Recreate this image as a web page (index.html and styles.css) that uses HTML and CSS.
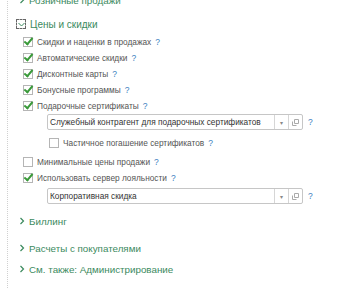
FILE: index.html
```html
<!DOCTYPE html>
<html>
<head>
    <title>Цены и скидки</title>
    <link rel="stylesheet" href="styles.css">
</head>
<body>
    <div class="panel">
        <div class="group-title cut">
            <svg class="chev" width="10" height="8" viewBox="0 0 10 8"><path d="M1.5 1 L4.5 4 L1.5 7" fill="none" stroke="#3b8a5e" stroke-width="1.2"/></svg>
            <span>Розничные продажи</span>
        </div>

        <div class="group-title open">
            <span class="toggle">
                <svg width="7" height="7" viewBox="0 0 7 7"><path d="M0.5 2 L3.5 5 L6.5 2" fill="none" stroke="#3b8a5e" stroke-width="1"/></svg>
            </span>
            <span class="big">Цены и скидки</span>
        </div>

        <div class="row first">
            <span class="box checked"></span>
            <span>Скидки и наценки в продажах</span>
            <span class="help">?</span>
        </div>
        <div class="row">
            <span class="box checked"></span>
            <span>Автоматические скидки</span>
            <span class="help">?</span>
        </div>
        <div class="row">
            <span class="box checked"></span>
            <span>Дисконтные карты</span>
            <span class="help">?</span>
        </div>
        <div class="row">
            <span class="box checked"></span>
            <span>Бонусные программы</span>
            <span class="help">?</span>
        </div>
        <div class="row">
            <span class="box checked"></span>
            <span>Подарочные сертификаты</span>
            <span class="help">?</span>
        </div>

        <div class="field-row">
            <div class="field">
                <span class="value">Служебный контрагент для подарочных сертификатов</span>
                <span class="btn">&#9662;</span>
                <span class="btn">
                    <svg width="7" height="7" viewBox="0 0 7 7"><path d="M2.5 0.5 H6.5 V4.5 H2.5 Z M0.5 2.5 V6.5 H4.5" fill="none" stroke="#aaa" stroke-width="1"/></svg>
                </span>
            </div>
            <span class="help">?</span>
        </div>

        <div class="row sub">
            <span class="box"></span>
            <span>Частичное погашение сертификатов</span>
            <span class="help">?</span>
        </div>
        <div class="row after-sub">
            <span class="box"></span>
            <span>Минимальные цены продажи</span>
            <span class="help">?</span>
        </div>
        <div class="row">
            <span class="box checked"></span>
            <span>Использовать сервер лояльности</span>
            <span class="help">?</span>
        </div>

        <div class="field-row second">
            <div class="field">
                <span class="value">Корпоративная скидка</span>
                <span class="btn">&#9662;</span>
                <span class="btn">
                    <svg width="7" height="7" viewBox="0 0 7 7"><path d="M2.5 0.5 H6.5 V4.5 H2.5 Z M0.5 2.5 V6.5 H4.5" fill="none" stroke="#aaa" stroke-width="1"/></svg>
                </span>
            </div>
            <span class="help">?</span>
        </div>

        <div class="group-title billing">
            <svg class="chev" width="10" height="8" viewBox="0 0 10 8"><path d="M1.5 1 L4.5 4 L1.5 7" fill="none" stroke="#3b8a5e" stroke-width="1.2"/></svg>
            <span>Биллинг</span>
        </div>
        <div class="group-title payments">
            <svg class="chev" width="10" height="8" viewBox="0 0 10 8"><path d="M1.5 1 L4.5 4 L1.5 7" fill="none" stroke="#3b8a5e" stroke-width="1.2"/></svg>
            <span>Расчеты с покупателями</span>
        </div>
        <div class="group-title see-also">
            <svg class="chev" width="10" height="8" viewBox="0 0 10 8"><path d="M1.5 1 L4.5 4 L1.5 7" fill="none" stroke="#3b8a5e" stroke-width="1.2"/></svg>
            <span>См. также: Администрирование</span>
        </div>
    </div>
</body>
</html>
```

FILE: styles.css
```css
body { margin: 0; background: #fff; font-family: "Liberation Sans", Arial, sans-serif; color: #555; overflow: hidden; }
.panel { margin-left: 7px; border-left: 1px dotted #d0d0d0; height: 296px; box-sizing: border-box; }

.group-title { display: flex; align-items: center; height: 16px; padding-left: 11px; color: #3b8a5e; font-size: 9.8px; white-space: nowrap; }
.group-title.cut { margin-top: -8px; }
.group-title.open { margin-top: 8px; padding-left: 8px; }
.group-title.billing { margin-top: 9px; }
.group-title.payments { margin-top: 11px; }
.group-title.see-also { margin-top: 5px; }
.chev { flex: none; }
.toggle { width: 8px; height: 8px; border: 1px dashed #666; display: flex; align-items: center; justify-content: center; margin-right: 4px; flex: none; }
.big { font-size: 10px; }

.row { display: flex; align-items: center; height: 16px; padding-left: 15px; font-size: 8.3px; white-space: nowrap; }
.row.first { margin-top: 2px; }
.row.sub { padding-left: 41px; margin-top: 5px; }
.row.after-sub { margin-top: 3px; }
.box { width: 8px; height: 8px; border: 1px solid #b5b5b5; background: #fff; margin-right: 4px; position: relative; flex: none; }
.box.checked::after { content: ""; position: absolute; left: 2px; top: -2px; width: 3px; height: 7px; border: solid #3a9a3a; border-width: 0 2px 2px 0; transform: rotate(40deg); }
.help { color: #3b7fc0; margin-left: 4px; font-size: 8.5px; flex: none; }

.field-row { display: flex; align-items: center; padding-left: 39px; }
.field-row.second { margin-top: 2px; }
.field { display: flex; align-items: stretch; width: 256px; height: 16px; box-sizing: border-box; border: 1px solid #c6c6c6; border-radius: 2px; font-size: 8.3px; color: #333; }
.value { flex: 1; padding-left: 2px; display: flex; align-items: center; white-space: nowrap; overflow: hidden; }
.btn { width: 13px; border-left: 1px solid #d6d6d6; display: flex; align-items: center; justify-content: center; color: #888; font-size: 6px; flex: none; }
.field-row .help { margin-left: 5px; }
```
